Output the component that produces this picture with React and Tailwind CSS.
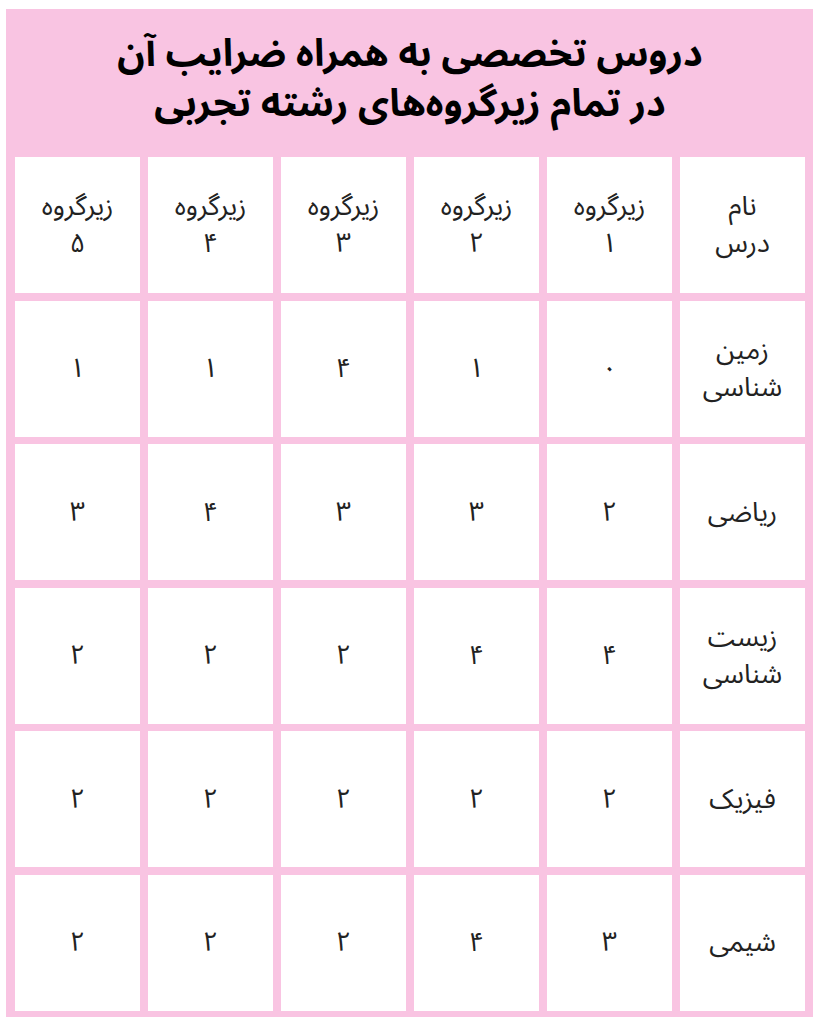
import React from "react";

const font = { fontFamily: '"Noto Sans Arabic", "DejaVu Sans", sans-serif' };

const header = [
  ["نام", "درس"],
  ["زیرگروه", "۱"],
  ["زیرگروه", "۲"],
  ["زیرگروه", "۳"],
  ["زیرگروه", "۴"],
  ["زیرگروه", "۵"],
];

const rows = [
  [["زمین", "شناسی"], "۰", "۱", "۴", "۱", "۱"],
  [["ریاضی"], "۲", "۳", "۳", "۴", "۳"],
  [["زیست", "شناسی"], "۴", "۴", "۲", "۲", "۲"],
  [["فیزیک"], "۲", "۲", "۲", "۲", "۲"],
  [["شیمی"], "۳", "۴", "۲", "۲", "۲"],
];

function Cell({ lines }) {
  return (
    <div className="bg-white h-[136px] flex flex-col items-center justify-center text-[27px] leading-[37px] text-[#222]">
      {lines.map((l, i) => (
        <span key={i}>{l}</span>
      ))}
    </div>
  );
}

export default function App() {
  return (
    <div className="bg-white w-[821px] h-[1024px] pt-[9px] pl-[6px]" style={font}>
      <div className="bg-[#f9c4e2] w-[807px] pl-[9px] pr-[8px] pb-[6px]">
        <div
          dir="rtl"
          className="h-[148px] flex flex-col items-center justify-center font-bold text-[38px] leading-[50px] text-black pb-[8px]"
        >
          <div>دروس تخصصی به همراه ضرایب آن</div>
          <div>در تمام زیرگروه‌های رشته تجربی</div>
        </div>
        <div dir="rtl" className="grid grid-cols-6 gap-x-[8px] gap-y-[7.5px]">
          {header.map((h, i) => (
            <Cell key={"h" + i} lines={h} />
          ))}
          {rows.map((r, ri) =>
            r.map((c, ci) => (
              <Cell key={ri + "-" + ci} lines={Array.isArray(c) ? c : [c]} />
            ))
          )}
        </div>
      </div>
    </div>
  );
}
